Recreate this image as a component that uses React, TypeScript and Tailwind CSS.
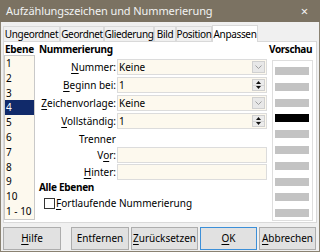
import React from 'react'

const levels = ['1', '2', '3', '4', '5', '6', '7', '8', '9', '10', '1 - 10']
const tabs = [
  { label: 'Ungeordnet', w: 'w-[57px]' },
  { label: 'Geordnet', w: 'w-[44px]' },
  { label: 'Gliederung', w: 'w-[50px]' },
  { label: 'Bild', w: 'w-[22px]' },
  { label: 'Position', w: 'w-[36px]' },
  { label: 'Anpassen', w: 'w-[46px]', active: true },
]

function U({ children }: { children: React.ReactNode }) {
  return <span className="underline decoration-1 underline-offset-2">{children}</span>
}

function Field({ kind, value }: { kind?: 'select' | 'spin'; value?: string }) {
  return (
    <div className="flex h-[16px] w-[150px] border border-[#dcdcdc] bg-[#fdf9ee]">
      <div className="flex-1 pl-[1px] leading-[14px]">{value}</div>
      {kind === 'select' && (
        <div className="m-[1px] flex w-[13px] items-center justify-center border border-[#d0d0d0] bg-[#e8e8e8]">
          <svg width="7" height="4" viewBox="0 0 7 4">
            <path d="M0.5 0.5 L3.5 3.5 L6.5 0.5" fill="none" stroke="#8c8c8c" strokeWidth="0.8" />
          </svg>
        </div>
      )}
      {kind === 'spin' && (
        <div className="m-[1px] flex w-[13px] flex-col border border-[#d0d0d0] bg-[#ececec]">
          <div className="flex flex-1 items-center justify-center border-b border-[#d6d6d6]">
            <svg width="5" height="3" viewBox="0 0 5 3">
              <path d="M0 3 L2.5 0 L5 3 Z" fill="#111" />
            </svg>
          </div>
          <div className="flex flex-1 items-center justify-center">
            <svg width="5" height="3" viewBox="0 0 5 3">
              <path d="M0 0 L2.5 3 L5 0 Z" fill="#111" />
            </svg>
          </div>
        </div>
      )}
    </div>
  )
}

function Row({ label, children, className = '' }: { label: React.ReactNode; children: React.ReactNode; className?: string }) {
  return (
    <div className={`flex items-center ${className}`}>
      <div className="w-[78px] pr-[1px] text-right leading-[16px]">{label}</div>
      {children}
    </div>
  )
}

function Button({ children, w, primary }: { children: React.ReactNode; w: string; primary?: boolean }) {
  return (
    <div
      className={`flex h-[23px] ${w} items-center justify-center border bg-[#e1e1e1] ${
        primary ? 'border-[#3c8fd8]' : 'border-[#adadad]'
      }`}
    >
      {children}
    </div>
  )
}

export default function App() {
  return (
    <div className="flex h-[252px] w-[320px] flex-col overflow-hidden bg-[#f0f0f0] font-['Noto_Sans',sans-serif] text-[10px] text-black">
      {/* title bar */}
      <div className="flex h-[22px] shrink-0 items-center justify-between bg-[#7b7262] pl-[6px] pr-[12px] text-[11px] tracking-[-0.1px] text-[#f2f2f2]">
        <span>Aufzählungszeichen und Nummerierung</span>
        <span className="text-[13px] leading-none">×</span>
      </div>

      <div className="flex flex-1 flex-col border-x border-b border-[#8a8272]">
        {/* tabs */}
        <div className="flex h-[19px] shrink-0 items-end pl-[2px]">
          {tabs.map((t) => (
            <div
              key={t.label}
              className={`flex ${t.w} items-center justify-center whitespace-nowrap border-x border-t leading-[14px] tracking-[-0.35px] ${
                t.active
                  ? 'relative z-10 -mb-[1px] h-[17px] border-[#d9d9d9] bg-white'
                  : 'h-[15px] border-[#dadada] bg-[#f0f0f0]'
              }`}
            >
              {t.label}
            </div>
          ))}
        </div>

        {/* panel */}
        <div className="mx-[2px] flex h-[182px] shrink-0 border border-[#d9d9d9] bg-white">
          {/* levels */}
          <div className="flex w-[31px] flex-col">
            <div className="h-[13px] pl-[1px] font-bold leading-[14px] tracking-[-0.3px]">Ebene</div>
            <div className="border border-[#c9c9c9] bg-[#fdf9ee]">
              {levels.map((l) => (
                <div
                  key={l}
                  className={`h-[14.8px] pl-[1px] leading-[14.8px] ${l === '4' ? 'bg-[#112a6a] text-white' : ''}`}
                >
                  {l}
                </div>
              ))}
            </div>
          </div>

          {/* settings */}
          <div className="ml-[4px] flex w-[228px] flex-col">
            <div className="h-[13px] font-bold leading-[14px] tracking-[-0.3px]">Nummerierung</div>
            <div className="mt-[4px] flex flex-col gap-[2px]">
              <Row label={<><U>N</U>ummer:</>}>
                <Field kind="select" value="Keine" />
              </Row>
              <Row label={<><U>B</U>eginn bei:</>}>
                <Field kind="spin" value="1" />
              </Row>
              <Row label={<><U>Z</U>eichenvorlage:</>}>
                <Field kind="select" value="Keine" />
              </Row>
              <Row label={<><U>V</U>ollständig:</>}>
                <Field kind="spin" value="1" />
              </Row>
            </div>
            <div className="mt-[2px] h-[16px] pl-[40px] leading-[16px]">Trenner</div>
            <Row label={<>V<U>o</U>r:</>}>
              <Field />
            </Row>
            <Row label={<><U>H</U>inter:</>} className="mt-[1px]">
              <Field />
            </Row>
            <div className="h-[14px] font-bold leading-[15px] tracking-[-0.3px]">Alle Ebenen</div>
            <div className="mt-[2px] flex h-[15px] items-center pl-[5px]">
              <div className="h-[11px] w-[11px] border border-[#333]" />
              <span className="ml-[1px]">
                <U>F</U>ortlaufende Nummerierung
              </span>
            </div>
          </div>

          {/* preview */}
          <div className="ml-[2px] flex flex-1 flex-col">
            <div className="h-[13px] whitespace-nowrap font-bold leading-[14px] tracking-[-0.4px]">Vorschau</div>
            <div className="ml-[3px] mt-[5px] flex h-[161px] w-[41px] flex-col gap-[7.8px] border border-[#dedede] bg-white pl-[2px] pt-[6px]">
              {levels.slice(0, 10).map((l) => (
                <div key={l} className={`h-[8px] w-[34px] ${l === '4' ? 'bg-black' : 'bg-[#c3c3c3]'}`} />
              ))}
            </div>
          </div>
        </div>

        {/* buttons */}
        <div className="flex pl-[2px] pt-[4px]">
          <Button w="w-[58px]">
            <span><U>H</U>ilfe</span>
          </Button>
          <div className="ml-[10px] flex gap-[2px]">
            <Button w="w-[58px]">Entfernen</Button>
            <Button w="w-[67px]">
              <span><U>Z</U>urücksetzen</span>
            </Button>
            <Button w="w-[57px]" primary>
              <span><U>O</U>K</span>
            </Button>
            <Button w="w-[57px]">
              <span><U>A</U>bbrechen</span>
            </Button>
          </div>
        </div>
      </div>
    </div>
  )
}
